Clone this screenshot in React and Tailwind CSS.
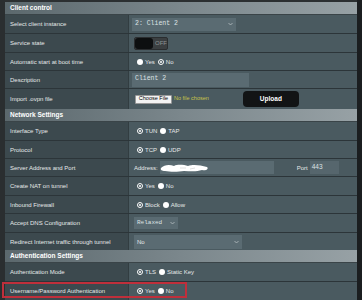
import React from "react";

const F = { fontFamily: '"Liberation Sans", Arial, sans-serif' };

function Header({ children, h = "h-[13px]" }) {
  return (
    <div className={`${h} flex items-center pl-[5px] bg-gradient-to-r from-[#5b686d] via-[#7b878c] to-[#97a1a5] border-b border-[#3a4448]`}>
      <span className="text-[6.5px] font-bold text-white leading-none">{children}</span>
    </div>
  );
}

function Row({ label, h = "h-[18px]", children, top = true }) {
  return (
    <div className={`${h} flex ${top ? "border-t border-[#2c3539]" : ""}`}>
      <div className="w-[123px] shrink-0 bg-[#3c494e] flex items-center pl-[5px] text-[6px] text-[#e6e8e8] leading-none">
        {label}
      </div>
      <div className="flex-1 bg-[#4a5a60] border-l border-[#323d41] flex items-center pl-[3px] text-[6px] text-[#e6e8e8] leading-none">
        {children}
      </div>
    </div>
  );
}

function Radio({ checked, label }) {
  return (
    <span className="flex items-center mr-[3px]">
      {checked ? (
        <span className="w-[6px] h-[6px] rounded-full border border-white flex items-center justify-center">
          <span className="w-[2px] h-[2px] rounded-full bg-white" />
        </span>
      ) : (
        <span className="w-[6px] h-[6px] rounded-full bg-white" />
      )}
      <span className="ml-[2px] text-[6px] text-[#e6e8e8]">{label}</span>
    </span>
  );
}

function Radios({ items }) {
  return (
    <div className="flex items-center pl-[5px]">
      {items.map((it, i) => (
        <Radio key={i} checked={it[1]} label={it[0]} />
      ))}
    </div>
  );
}

function Chevron() {
  return (
    <svg width="5" height="4" viewBox="0 0 5 4" className="shrink-0">
      <path d="M0.5 1 L2.5 3 L4.5 1" stroke="#b8c0c3" strokeWidth="0.8" fill="none" />
    </svg>
  );
}

export default function App() {
  return (
    <div style={F} className="w-[362px] h-[300px] overflow-hidden bg-[#2b2f31] flex">
      <div className="w-[5px] shrink-0 bg-[#2a2e30]" />
      <div className="w-[352px] shrink-0 flex flex-col pt-[2px]">
        <Header>Client control</Header>
        <Row label="Select client instance" top={false}>
          <div className="w-[104px] h-[13px] bg-[#5a6b72] flex items-center justify-between px-[3px]">
            <span className="text-[6.5px] text-[#dde2e3] font-['Liberation_Mono',monospace]">2: Client 2</span>
            <Chevron />
          </div>
        </Row>
        <Row label="Service state" h="h-[19px]">
          <div className="ml-[2px] h-[13px] w-[34px] flex items-center rounded-[2px] overflow-hidden bg-[#3b3f41] border border-[#2a2d2f]">
            <div className="w-[18px] h-full bg-[#0d0f10] rounded-[3px]" />
            <span className="ml-[2px] text-[6px] text-[#8e9496]">OFF</span>
          </div>
        </Row>
        <Row label="Automatic start at boot time">
          <Radios items={[["Yes", false], ["No", true]]} />
        </Row>
        <Row label="Description">
          <div className="w-[117px] h-[14px] bg-[#5a6b72] flex items-center px-[3px]">
            <span className="text-[6.5px] text-[#dde2e3] font-['Liberation_Mono',monospace]">Client 2</span>
          </div>
        </Row>
        <Row label="Import .ovpn file" h="h-[21px]">
          <div className="ml-[3px] h-[9px] w-[37px] bg-[#f3f3f3] border border-[#999] rounded-[1px] flex items-center justify-center text-[5.5px] text-black">
            Choose File
          </div>
          <span className="ml-[2px] text-[5.5px] text-[#c9c44a]">No file chosen</span>
          <div className="ml-[34px] w-[56px] h-[16px] bg-[#121415] rounded-[4px] flex items-center justify-center text-[6.5px] font-bold text-white">
            Upload
          </div>
        </Row>
        <Header>Network Settings</Header>
        <Row label="Interface Type" top={false}>
          <Radios items={[["TUN", true], ["TAP", false]]} />
        </Row>
        <Row label="Protocol">
          <Radios items={[["TCP", true], ["UDP", false]]} />
        </Row>
        <Row label="Server Address and Port">
          <span className="ml-[2px] text-[6px] text-[#e6e8e8]">Address:</span>
          <div className="ml-[2px] w-[114px] h-[13px] bg-[#5a6b72] flex items-center relative">
            <svg width="50" height="10" viewBox="0 0 50 10" className="absolute left-0 top-[2px]">
              <path d="M1 5 C4 2 9 1 14 3 C18 1 24 2 28 3 C33 1 40 2 47 4 C49 6 46 8 42 7 C36 9 30 8 24 8 C18 9 10 9 5 8 C2 8 0 7 1 5 Z" fill="#ffffff" />
              <path d="M20 5 L26 5 M30 6 L35 5" stroke="#c9c9c9" strokeWidth="0.6" />
            </svg>
          </div>
          <span className="ml-[23px] text-[6px] text-[#e6e8e8]">Port</span>
          <div className="ml-[2px] w-[29px] h-[13px] bg-[#56666d] flex items-center px-[2px] text-[6.5px] text-[#dde2e3]">443</div>
        </Row>
        <Row label="Create NAT on tunnel" h="h-[19px]">
          <Radios items={[["Yes", true], ["No", false]]} />
        </Row>
        <Row label="Inbound Firewall">
          <Radios items={[["Block", true], ["Allow", false]]} />
        </Row>
        <Row label="Accept DNS Configuration" h="h-[19px]">
          <div className="ml-[2px] w-[44px] h-[12px] bg-[#5a6b72] flex items-center justify-between px-[3px]">
            <span className="text-[6px] text-[#dde2e3] font-['Liberation_Mono',monospace]">Relaxed</span>
            <Chevron />
          </div>
        </Row>
        <Row label="Redirect Internet traffic through tunnel">
          <div className="ml-[2px] w-[108px] h-[14px] bg-[#5a6b72] flex items-center justify-between px-[3px]">
            <span className="text-[6px] text-[#e6e8e8]">No</span>
            <Chevron />
          </div>
        </Row>
        <Header>Authentication Settings</Header>
        <Row label="Authentication Mode" top={false}>
          <Radios items={[["TLS", true], ["Static Key", false]]} />
        </Row>
        <div className="relative">
          <Row label="Username/Password Authentication" h="h-[19px]">
            <Radios items={[["Yes", true], ["No", false]]} />
          </Row>
          <div className="absolute left-[-3px] top-[1px] w-[185px] h-[16px] border-2 border-[#bf2f3b]" />
        </div>
      </div>
      <div className="flex-1 bg-[#1b1e20]" />
    </div>
  );
}
